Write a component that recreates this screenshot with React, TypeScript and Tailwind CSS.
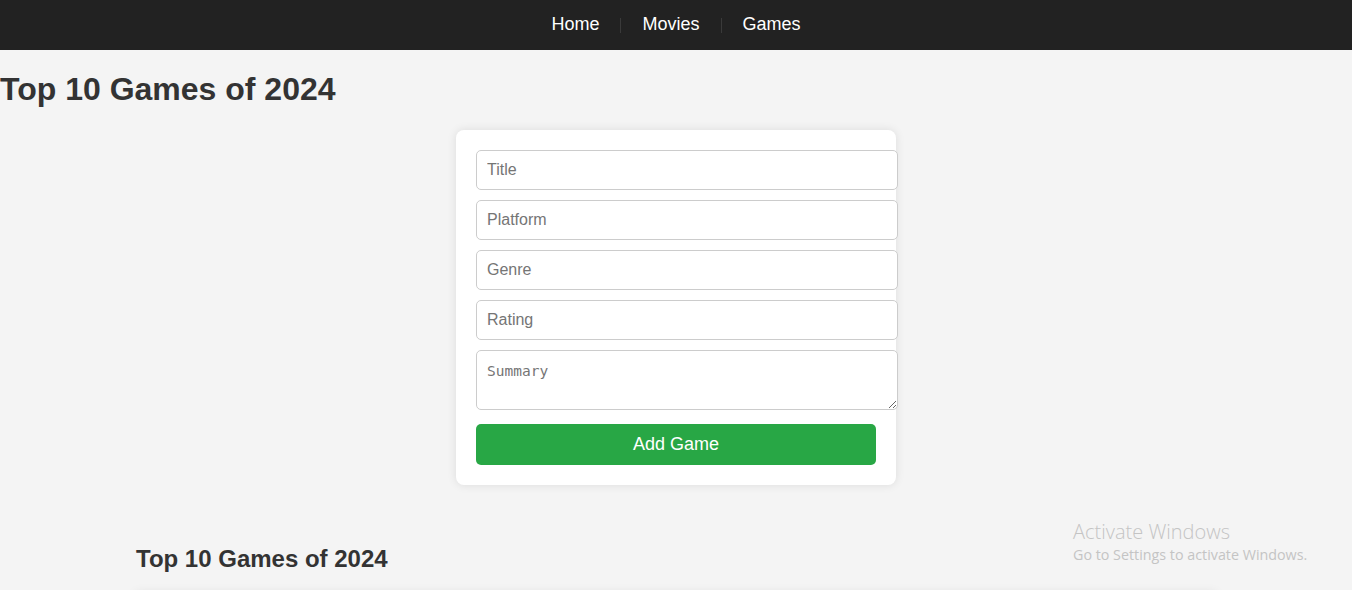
import React from "react";

export default function App() {
  const inputCls =
    "block w-[422px] h-[40px] px-[10px] mb-[10px] border border-[#cccccc] rounded-[5px] bg-white text-[16px] text-[#333] placeholder:text-[#757575] outline-none";
  return (
    <div
      className="min-h-[590px] bg-[#f4f4f4] text-[#333333] relative overflow-hidden"
      style={{ fontFamily: '"Liberation Sans", Arial, sans-serif' }}
    >
      <nav className="h-[50px] bg-[#222222] flex items-center justify-center gap-[21px]">
        <a className="text-white text-[18px] leading-[normal] -mt-[2px]" href="#">Home</a>
        <span className="w-px h-[15px] bg-[#3a3a3a]" />
        <a className="text-white text-[18px] leading-[normal] -mt-[2px]" href="#">Movies</a>
        <span className="w-px h-[15px] bg-[#3a3a3a]" />
        <a className="text-white text-[18px] leading-[normal] -mt-[2px]" href="#">Games</a>
      </nav>

      <h1 className="text-[32px] font-bold leading-[normal] my-[21.44px] text-[#333333]">
        Top 10 Games of 2024
      </h1>

      <div className="w-[440px] mx-auto p-5 bg-white rounded-lg shadow-[0_0_10px_rgba(0,0,0,0.1)]">
        <input className={inputCls} placeholder="Title" />
        <input className={inputCls} placeholder="Platform" />
        <input className={inputCls} placeholder="Genre" />
        <input className={inputCls} placeholder="Rating" />
        <textarea
          className="block w-[422px] h-[60px] px-[10px] pt-[12px] pb-[8px] mb-[14px] border border-[#cccccc] rounded-[5px] bg-white text-[14.5px] leading-[normal] text-[#333] placeholder:text-[#757575] outline-none"
          style={{ fontFamily: '"DejaVu Sans Mono", "Liberation Mono", monospace' }}
          placeholder="Summary"
        />
        <button className="block w-[400px] h-[41px] bg-[#28a745] text-white text-[18px] leading-[normal] rounded-[5px]">
          Add Game
        </button>
      </div>

      <div className="w-[1080px] mx-auto">
        <h2 className="mt-[60px] mb-[20px] text-[24px] font-bold leading-[normal] text-[#333333]">
          Top 10 Games of 2024
        </h2>
        <div className="h-[200px] bg-white shadow-[0_0_10px_rgba(0,0,0,0.1)]" />
      </div>

      <div
        className="absolute left-[1073px] top-[522px] text-[#c4c4c4] leading-none"
        style={{ fontFamily: '"Open Sans", "Noto Sans", sans-serif' }}
      >
        <div className="text-[20px] font-light">Activate Windows</div>
        <div className="text-[14.3px] mt-[6px]">Go to Settings to activate Windows.</div>
      </div>
    </div>
  );
}
